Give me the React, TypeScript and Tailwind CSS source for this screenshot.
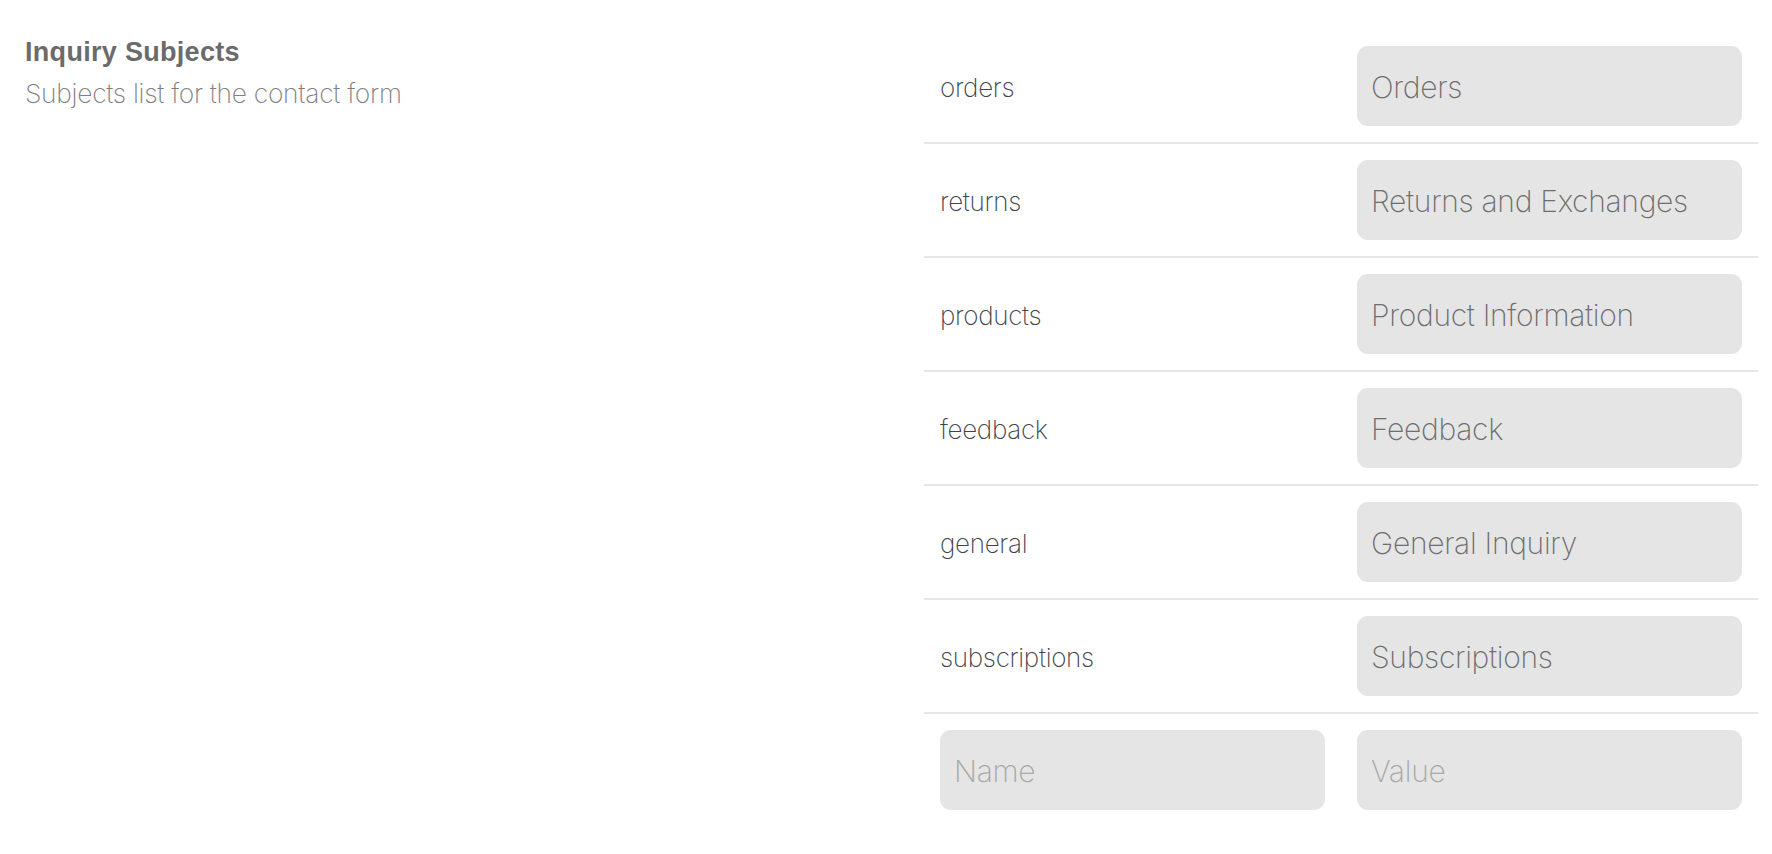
import { useState } from 'react';

type Subject = { name: string; value: string };

const INITIAL: Subject[] = [
  { name: 'orders', value: 'Orders' },
  { name: 'returns', value: 'Returns and Exchanges' },
  { name: 'products', value: 'Product Information' },
  { name: 'feedback', value: 'Feedback' },
  { name: 'general', value: 'General Inquiry' },
  { name: 'subscriptions', value: 'Subscriptions' },
];

const inputClass =
  'w-full h-[80px] rounded-[11px] bg-[#e5e5e5] pl-[14px] pr-[15px] pt-[2px] text-[30px] font-extralight tracking-[-0.3px] text-[#6e6e6e] placeholder:text-[#a8a8a8] outline-none';

export default function App() {
  const [subjects, setSubjects] = useState<Subject[]>(INITIAL);
  const [draft, setDraft] = useState<Subject>({ name: '', value: '' });

  const setValue = (i: number, value: string) => {
    setSubjects((prev) => prev.map((s, idx) => (idx === i ? { ...s, value } : s)));
  };

  return (
    <div className="min-h-screen bg-white flex pl-[25px] pr-[14px] font-['Inter',sans-serif]">
      <div className="flex-1 pt-[36px]">
        <h2 className="text-[27px] leading-[32px] tracking-[0.3px] font-bold text-[#6b6b6b] font-['Liberation_Sans',sans-serif]">
          Inquiry Subjects
        </h2>
        <p className="mt-[9px] text-[26.4px] leading-[32px] font-extralight tracking-[-0.3px] text-[#808080]">
          Subjects list for the contact form
        </p>
      </div>

      <div className="w-[834px] pt-[30px]">
        {subjects.map((s, i) => (
          <div
            key={s.name}
            className="grid grid-cols-2 gap-[32px] items-center px-4 py-4 border-b-2 border-[#e6e6e6]"
          >
            <span className="pt-[3px] text-[26px] font-extralight tracking-[-0.3px] text-[#3f434b]">
              {s.name}
            </span>
            <input
              type="text"
              value={s.value}
              onChange={(e) => setValue(i, e.target.value)}
              className={inputClass}
            />
          </div>
        ))}
        <div className="grid grid-cols-2 gap-[32px] px-4 py-4">
          <input
            type="text"
            placeholder="Name"
            value={draft.name}
            onChange={(e) => setDraft({ ...draft, name: e.target.value })}
            className={inputClass}
          />
          <input
            type="text"
            placeholder="Value"
            value={draft.value}
            onChange={(e) => setDraft({ ...draft, value: e.target.value })}
            className={inputClass}
          />
        </div>
      </div>
    </div>
  );
}
